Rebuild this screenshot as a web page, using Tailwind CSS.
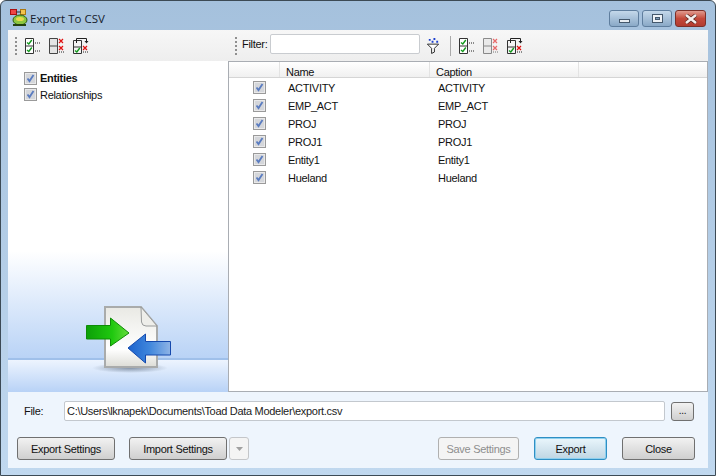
<!DOCTYPE html>
<html lang="en">
<head>
<meta charset="UTF-8">
<title>Export To CSV</title>
<script src="https://cdn.jsdelivr.net/npm/@tailwindcss/browser@4"></script>
</head>
<body class="bg-white font-['Liberation_Sans',sans-serif] text-[11px] tracking-[-0.3px] text-[#111]">

<svg class="hidden">
  <symbol id="chk" viewBox="0 0 13 13">
    <rect x="0.5" y="0.5" width="12" height="12" fill="#e9e9ea" stroke="#9a9a9a"/>
    <rect x="2" y="2" width="9" height="9" fill="#d4d6da"/>
    <path d="M3.500 6.500l2 2.600 4-6" fill="none" stroke="#5a7cc0" stroke-width="1.800"/>
  </symbol>
  <symbol id="all" viewBox="0 0 16 16">
    <path d="M.5.5h8v15h-8zM.5 8h8" fill="#fff" stroke="#333"/>
    <path d="M2 4.500l1.800 1.500 3-4M2 12l1.800 1.500 3-4" fill="none" stroke="#129a1c" stroke-width="1.400"/>
    <path d="M10 5h1M12 5h1M14 5h1M10 13h1M12 13h1M14 13h1" stroke="#222"/>
  </symbol>
  <symbol id="none" viewBox="0 0 16 16">
    <path d="M.5.5h8v15h-8zM.5 8h8" fill="#e4e4e4" stroke="#444"/>
    <path d="M10 1l4 4M14 1l-4 4M10 8l4 4M14 8l-4 4" stroke="#e01010" stroke-width="1.200"/>
    <path d="M10 14h1M12 14h1M14 14h1" stroke="#222"/>
  </symbol>
  <symbol id="inv" viewBox="0 0 16 16">
    <path d="M.5 2.500h8v13h-8zM.5 9h8" fill="#f4f4f4" stroke="#333"/>
    <path d="M3.500 5V.5h10V4" fill="none" stroke="#222"/>
    <path d="M11.500 3h4l-2 2.500z" fill="#222"/>
    <path d="M2 12.500l1.800 1.500 3-4" fill="none" stroke="#129a1c" stroke-width="1.400"/>
    <path d="M10 8l4 4M14 8l-4 4" stroke="#e01010" stroke-width="1.200"/>
    <path d="M10 14h1M12 14h1M14 14h1" stroke="#222"/>
  </symbol>
</svg>

<div class="w-[716px] h-[476px] flex flex-col overflow-hidden rounded-t-[6px] border border-[#3c4a55] bg-gradient-to-b from-[#a5c1dd] to-[#c0d8ef]">
  <!-- title bar -->
  <div class="h-[29px] shrink-0 flex items-start pl-[9px] pr-[9px]">
    <svg class="w-[18px] h-[18px] mt-[8px]" viewBox="0 0 18 18">
      <rect x="0.500" y="0.500" width="6" height="5" fill="#ee4444" stroke="#a11"/>
      <rect x="10.500" y="0.500" width="5" height="5" fill="#f3c34c" stroke="#a71"/>
      <path d="M6 3h5" stroke="#333"/>
      <ellipse cx="10" cy="11" rx="7" ry="5" fill="#8cc63f" stroke="#2f5d12"/>
      <ellipse cx="10" cy="10" rx="4" ry="2" fill="#e8d94a"/>
      <path d="M3 16h13" stroke="#24410d" stroke-width="2"/>
    </svg>
    <span class="ml-[2px] mt-[10px] text-[11.5px] tracking-normal leading-[16px] text-[#15202c] font-['Open_Sans',sans-serif]">Export To CSV</span>
    <div class="ml-auto mt-[9px] flex gap-[3px]">
      <div class="w-[30px] h-[17px] rounded-[3px] border border-[#5f7e9e] bg-gradient-to-b from-[#c4d8ea] to-[#8aa9c7] flex items-end justify-center pb-[3px]">
        <div class="w-[11px] h-[4px] bg-[#e8edf2] border border-[#44586c]"></div>
      </div>
      <div class="w-[30px] h-[17px] rounded-[3px] border border-[#5f7e9e] bg-gradient-to-b from-[#c4d8ea] to-[#8aa9c7] flex items-center justify-center">
        <div class="w-[11px] h-[9px] border border-[#44586c] bg-[#eef2f6] flex items-center justify-center"><div class="w-[5px] h-[3px] bg-[#7f9bb8] border border-[#44586c]"></div></div>
      </div>
      <div class="w-[31px] h-[17px] rounded-[3px] border border-[#7c2f28] bg-gradient-to-b from-[#e09a8f] via-[#c4493b] to-[#b23c30] flex items-center justify-center">
        <svg class="w-[14px] h-[10px]" viewBox="0 0 14 10"><path d="M2 1l10 8M12 1L2 9" stroke="#5e2a24" stroke-width="4"/><path d="M2 1l10 8M12 1L2 9" stroke="#f4efee" stroke-width="2.500"/></svg>
      </div>
    </div>
  </div>

  <div class="flex-1 mx-[7px] mb-[7px] flex flex-col bg-[#eef5fd]">
    <div class="flex flex-1 min-h-0">
      <!-- left panel -->
      <div class="w-[220px] shrink-0 flex flex-col">
        <div class="h-[31px] shrink-0 bg-gradient-to-b from-[#f7f7f7] to-[#eeeeee] flex items-center pl-[7px]">
          <div class="w-[2px] h-[18px] border-l-2 border-dotted border-[#8f8f8f]"></div>
          <svg class="w-[16px] h-[16px] ml-[8px]"><use href="#all"/></svg>
          <svg class="w-[16px] h-[16px] ml-[8px]"><use href="#none"/></svg>
          <svg class="w-[16px] h-[16px] ml-[8px]"><use href="#inv"/></svg>
        </div>
        <div class="flex-1 flex flex-col bg-white">
          <div class="pt-[11px] pl-[16px] flex flex-col gap-[3px]">
            <label class="flex items-center gap-[3px] h-[13px]"><svg class="w-[13px] h-[13px]"><use href="#chk"/></svg><b>Entities</b></label>
            <label class="flex items-center gap-[3px] h-[13px]"><svg class="w-[13px] h-[13px]"><use href="#chk"/></svg><span class="pt-px">Relationships</span></label>
          </div>
          <div class="mt-auto h-[109px] bg-gradient-to-b from-white to-[#b9d3f6] border-b-2 border-[#9fc0ea] relative">
            <!-- export picture lies across the band below -->
            <svg class="absolute left-[76px] top-[54px] w-[90px] h-[70px] z-10" viewBox="0 0 90 70">
              <defs>
                <linearGradient id="green" x1="0" y1="0" x2="1" y2="0"><stop offset="0" stop-color="#0ca008"/><stop offset="0.6" stop-color="#1fc80f"/><stop offset="1" stop-color="#66dd3c"/></linearGradient>
                <linearGradient id="blue" x1="0" y1="0" x2="1" y2="0"><stop offset="0" stop-color="#1b62cd"/><stop offset="0.5" stop-color="#3f86dc"/><stop offset="1" stop-color="#8fb4e6"/></linearGradient>
                <linearGradient id="paper" x1="0" y1="0" x2="0" y2="1"><stop offset="0" stop-color="#e9e9e4"/><stop offset="0.7" stop-color="#ffffff"/><stop offset="1" stop-color="#dcdcd6"/></linearGradient>
                <radialGradient id="shade"><stop offset="0" stop-color="#5f6f84" stop-opacity="0.7"/><stop offset="1" stop-color="#5f6f84" stop-opacity="0"/></radialGradient>
              </defs>
              <ellipse cx="46" cy="63" rx="38" ry="5" fill="url(#shade)"/>
              <path d="M21 2h36l16 19v41H21z" fill="url(#paper)" stroke="#a9abab" stroke-width="2"/>
              <path d="M57 2l16 19H62q-4 0-4.500-4z" fill="#eeeeea" stroke="#9a9c9c"/>
              <path d="M2.500 20.500h24V13L45 28 26.500 41v-7h-24z" fill="url(#green)" stroke="#0e8c07"/>
              <path d="M86.500 36.500h-25V29L44 43l17.500 15v-8h25z" fill="url(#blue)" stroke="#1549ad"/>
            </svg>
          </div>
          <div class="h-[32px] bg-gradient-to-b from-[#edf4fe] to-[#b8d2f6]"></div>
        </div>
      </div>
      <!-- right panel -->
      <div class="flex-1 min-w-0 flex flex-col">
        <div class="h-[31px] shrink-0 bg-gradient-to-b from-[#f7f7f7] to-[#eeeeee] flex items-center pl-[7px]">
          <div class="w-[2px] h-[18px] border-l-2 border-dotted border-[#8f8f8f]"></div>
          <span class="ml-[5px] mb-[2px] w-[26px]">Filter:</span>
          <div class="ml-[2px] mb-[3px] w-[150px] h-[20px] bg-white border border-[#c9ccd0] rounded-[2px]"></div>
          <svg class="ml-[6px] w-[14px] h-[16px]" viewBox="0 0 15 17">
            <path d="M1.500 6.500h12L9 11v4l-3 1.500V11z" fill="#fff" stroke="#222"/>
            <path d="M3 1h2v2H3zM8 0h2v2H8zM11 3h2v2h-2zM6 3h2v2H6z" fill="#1c3fcf"/>
          </svg>
          <div class="ml-[10px] w-px h-[20px] bg-[#a9a9a9]"></div>
          <svg class="ml-[8px] w-[16px] h-[16px]"><use href="#all"/></svg>
          <svg class="ml-[8px] w-[16px] h-[16px] opacity-60"><use href="#none"/></svg>
          <svg class="ml-[8px] w-[16px] h-[16px]"><use href="#inv"/></svg>
        </div>
        <div class="flex-1 bg-white border border-[#a9adb3] flex flex-col">
          <div class="h-[16px] shrink-0 flex bg-gradient-to-b from-white to-[#f0f0f0] border-b border-[#d5d5d5] leading-[20px]">
            <div class="w-[51px] border-r border-[#e3e3e3]"></div>
            <div class="w-[150px] pl-[6px] border-r border-[#e3e3e3]">Name</div>
            <div class="w-[149px] pl-[6px] border-r border-[#e3e3e3]">Caption</div>
          </div>
          <div>
            <div class="h-[18px] flex items-center"><div class="w-[51px] pl-[24px] h-[13px]"><svg class="w-[13px] h-[13px]"><use href="#chk"/></svg></div><div class="w-[150px] pl-[8px] pt-[2px]">ACTIVITY</div><div class="pl-[8px] pt-[2px]">ACTIVITY</div></div>
            <div class="h-[18px] flex items-center"><div class="w-[51px] pl-[24px] h-[13px]"><svg class="w-[13px] h-[13px]"><use href="#chk"/></svg></div><div class="w-[150px] pl-[8px] pt-[2px]">EMP_ACT</div><div class="pl-[8px] pt-[2px]">EMP_ACT</div></div>
            <div class="h-[18px] flex items-center"><div class="w-[51px] pl-[24px] h-[13px]"><svg class="w-[13px] h-[13px]"><use href="#chk"/></svg></div><div class="w-[150px] pl-[8px] pt-[2px]">PROJ</div><div class="pl-[8px] pt-[2px]">PROJ</div></div>
            <div class="h-[18px] flex items-center"><div class="w-[51px] pl-[24px] h-[13px]"><svg class="w-[13px] h-[13px]"><use href="#chk"/></svg></div><div class="w-[150px] pl-[8px] pt-[2px]">PROJ1</div><div class="pl-[8px] pt-[2px]">PROJ1</div></div>
            <div class="h-[18px] flex items-center"><div class="w-[51px] pl-[24px] h-[13px]"><svg class="w-[13px] h-[13px]"><use href="#chk"/></svg></div><div class="w-[150px] pl-[8px] pt-[2px]">Entity1</div><div class="pl-[8px] pt-[2px]">Entity1</div></div>
            <div class="h-[18px] flex items-center"><div class="w-[51px] pl-[24px] h-[13px]"><svg class="w-[13px] h-[13px]"><use href="#chk"/></svg></div><div class="w-[150px] pl-[8px] pt-[2px]">Hueland</div><div class="pl-[8px] pt-[2px]">Hueland</div></div>
          </div>
        </div>
      </div>
    </div>
    <!-- file row -->
    <div class="h-[76px] shrink-0 flex flex-col pl-[9px] pr-[13px]">
      <div class="mt-[9px] h-[20px] flex items-center">
        <span class="w-[47px] pl-[7px]">File:</span>
        <div class="w-[601px] h-[20px] bg-white border border-[#c3c8ce] rounded-[2px] pl-[2px] leading-[18px] text-[#222]">C:\Users\lknapek\Documents\Toad Data Modeler\export.csv</div>
        <button class="ml-[6px] w-[23px] h-[19px] rounded-[3px] border border-[#707070] bg-gradient-to-b from-[#f2f2f2] to-[#cfcfcf] text-[10px] leading-[14px]">...</button>
      </div>
      <div class="mt-[16px] flex items-center">
        <button class="w-[98px] h-[23px] rounded-[3px] border border-[#707070] bg-gradient-to-b from-[#f2f2f2] to-[#cfcfcf] pt-[2px]">Export Settings</button>
        <button class="ml-[14px] w-[98px] h-[23px] rounded-[3px] border border-[#707070] bg-gradient-to-b from-[#f2f2f2] to-[#cfcfcf] pt-[2px]">Import Settings</button>
        <button class="ml-[2px] w-[20px] h-[23px] rounded-[3px] border border-[#c4c6c9] bg-[#f4f4f4] flex items-center justify-center"><svg class="w-[7px] h-[4px]" viewBox="0 0 7 4"><path d="M0 0h7L3.500 4z" fill="#a0a0a0"/></svg></button>
        <button class="ml-auto w-[81px] h-[23px] rounded-[3px] border border-[#b0b0b0] bg-[#f4f4f4] text-[#8e8e8e] pt-[2px]">Save Settings</button>
        <button class="ml-[15px] w-[73px] h-[23px] rounded-[3px] border border-[#2f8fc4] bg-gradient-to-b from-[#eaf6fc] to-[#bfd6e3] shadow-[inset_0_0_0_1px_#8fd0ee] pt-[2px]">Export</button>
        <button class="ml-[15px] w-[73px] h-[23px] rounded-[3px] border border-[#707070] bg-gradient-to-b from-[#f2f2f2] to-[#cfcfcf] pt-[2px]">Close</button>
      </div>
    </div>
  </div>
</div>
</body>
</html>
